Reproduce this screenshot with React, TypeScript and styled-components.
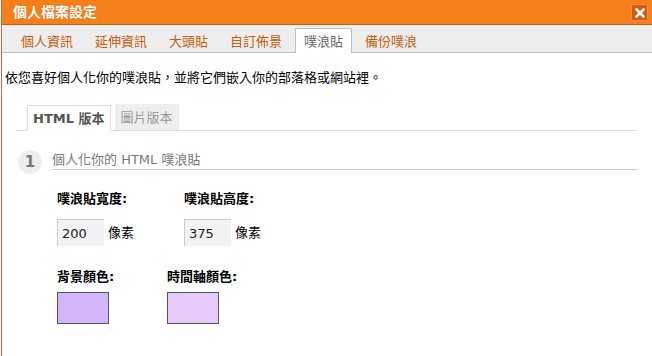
import React from "react"
import styled, { createGlobalStyle } from "styled-components"

const GlobalStyle = createGlobalStyle`
  html, body {
    margin: 0;
    padding: 0;
    background: #fff;
  }
  body {
    font-family: "DejaVu Sans", "Noto Sans CJK TC", sans-serif;
    font-size: 13px;
    color: #000;
  }
`

const mainTabs = ["個人資訊", "延伸資訊", "大頭貼", "自訂佈景", "噗浪貼", "備份噗浪"]

export default function App() {
  return (
    <>
      <GlobalStyle />
      <Dialog>
        <Header>
          <Title>個人檔案設定</Title>
          <CloseButton aria-label="close">
            <svg width="10" height="10" viewBox="0 0 10 10">
              <path d="M1.5 1.5 L8.5 8.5 M8.5 1.5 L1.5 8.5" stroke="#fff" strokeWidth="2.6" strokeLinecap="square" />
            </svg>
          </CloseButton>
        </Header>
        <TabBar>
          {mainTabs.map((t) => (
            <Tab key={t} active={t === "噗浪貼"}>
              {t}
            </Tab>
          ))}
        </TabBar>
        <Body>
          <Description>依您喜好個人化你的噗浪貼，並將它們嵌入你的部落格或網站裡。</Description>
          <Section>
            <SubTabs>
              <SubTab active>HTML 版本</SubTab>
              <SubTab>圖片版本</SubTab>
            </SubTabs>
            <StepRow>
              <StepNumber>1</StepNumber>
              <StepTitle>個人化你的 HTML 噗浪貼</StepTitle>
            </StepRow>
            <Fields>
              <FieldRow>
                <FieldGroup width={127}>
                  <Label>噗浪貼寬度:</Label>
                  <InputLine>
                    <SizeInput defaultValue="200" />
                    <Unit>像素</Unit>
                  </InputLine>
                </FieldGroup>
                <FieldGroup width={127}>
                  <Label>噗浪貼高度:</Label>
                  <InputLine>
                    <SizeInput defaultValue="375" />
                    <Unit>像素</Unit>
                  </InputLine>
                </FieldGroup>
              </FieldRow>
              <FieldRow tight>
                <FieldGroup width={110}>
                  <Label>背景顏色:</Label>
                  <Swatch color="#d2b5fa" />
                </FieldGroup>
                <FieldGroup width={110}>
                  <Label>時間軸顏色:</Label>
                  <Swatch color="#e6cafc" />
                </FieldGroup>
              </FieldRow>
            </Fields>
          </Section>
        </Body>
      </Dialog>
    </>
  )
}

const Dialog = styled.div`
  margin-left: 1px;
  border-left: 1px solid #bf6d45;
  height: 356px;
  box-sizing: border-box;
  background: #fff;
`

const Header = styled.div`
  height: 24px;
  background: #f5801a;
  border-bottom: 1px solid #c65f14;
  display: flex;
  align-items: center;
  justify-content: space-between;
  padding: 0 4px 0 11px;
`

const Title = styled.div`
  color: #fff;
  font-weight: bold;
  font-size: 14px;
  line-height: 18px;
  text-shadow: 0 0 1px rgba(120, 50, 0, 0.4);
`

const CloseButton = styled.div`
  width: 15px;
  height: 15px;
  margin-top: 1px;
  background: #d55a10;
  border: 1px solid #eb9050;
  border-radius: 2px;
  display: flex;
  align-items: center;
  justify-content: center;
`

const TabBar = styled.div`
  height: 24px;
  padding: 3px 0 0 10px;
  background: #eeeeee;
  border-bottom: 1px solid #c0c0c0;
  display: flex;
  align-items: flex-end;
  gap: 4px;
`

const Tab = styled.div<{ active?: boolean }>`
  height: 23px;
  line-height: 25px;
  padding: 0 8px;
  font-size: 13px;
  color: ${(p) => (p.active ? "#666" : "#c95a0c")};
  background: ${(p) => (p.active ? "#fff" : "transparent")};
  border: 1px solid ${(p) => (p.active ? "#c0c0c0" : "transparent")};
  border-bottom: none;
  margin-bottom: -1px;
  padding-bottom: 1px;
  box-sizing: content-box;
`

const Body = styled.div`
  padding: 15px 15px 0 3px;
`

const Description = styled.div`
  line-height: 18px;
  margin-top: 1px;
`

const Section = styled.div`
  margin-left: 12px;
  margin-top: 17px;
`

const SubTabs = styled.div`
  display: flex;
  align-items: flex-end;
  gap: 4px;
  padding-left: 10px;
  border-bottom: 1px solid #dddddd;
  height: 26px;
`

const SubTab = styled.div<{ active?: boolean }>`
  height: 26px;
  line-height: 26px;
  padding: 0 5px;
  font-size: 13px;
  font-weight: ${(p) => (p.active ? "bold" : "normal")};
  color: ${(p) => (p.active ? "#555" : "#999")};
  background: ${(p) => (p.active ? "#fff" : "#eeeeee")};
  border: 1px solid ${(p) => (p.active ? "#dddddd" : "#eeeeee")};
  border-bottom: none;
  margin-bottom: ${(p) => (p.active ? "-1px" : "0")};
  box-sizing: border-box;
  padding-bottom: ${(p) => (p.active ? "0" : "1px")};
`

const StepRow = styled.div`
  display: flex;
  align-items: flex-start;
  margin-top: 19px;
`

const StepNumber = styled.div`
  width: 24px;
  height: 24px;
  border-radius: 50%;
  background: #eeeeee;
  color: #777;
  font-weight: bold;
  font-size: 15px;
  display: flex;
  align-items: center;
  justify-content: center;
  margin-left: 1px;
`

const StepTitle = styled.div`
  flex: 1;
  margin-left: 10px;
  margin-top: 1px;
  color: #777;
  line-height: 18px;
  border-bottom: 1px solid #cccccc;
`

const Fields = styled.div`
  margin-left: 40px;
  margin-top: 16px;
`

const FieldRow = styled.div<{ tight?: boolean }>`
  display: flex;
  margin-top: ${(p) => (p.tight ? "22px" : "0")};
`

const FieldGroup = styled.div<{ width: number }>`
  width: ${(p) => p.width}px;
  display: flex;
  flex-direction: column;
`

const Label = styled.div`
  font-weight: bold;
  line-height: 18px;
  margin-bottom: 6px;
`

const InputLine = styled.div`
  display: flex;
  align-items: center;
  gap: 4px;
  margin-top: 5px;
`

const SizeInput = styled.input`
  width: 47px;
  height: 27px;
  box-sizing: border-box;
  padding: 0 0 0 4px;
  border: none;
  border-top: 1px solid #cccccc;
  border-left: 1px solid #cccccc;
  background: #f2f2f2;
  font-family: "DejaVu Sans", sans-serif;
  font-size: 13px;
  color: #222;
  outline: none;
`

const Unit = styled.span`
  line-height: 18px;
`

const Swatch = styled.div<{ color: string }>`
  width: 52px;
  height: 32px;
  box-sizing: border-box;
  border: 1px solid #555;
  background: ${(p) => p.color};
`
